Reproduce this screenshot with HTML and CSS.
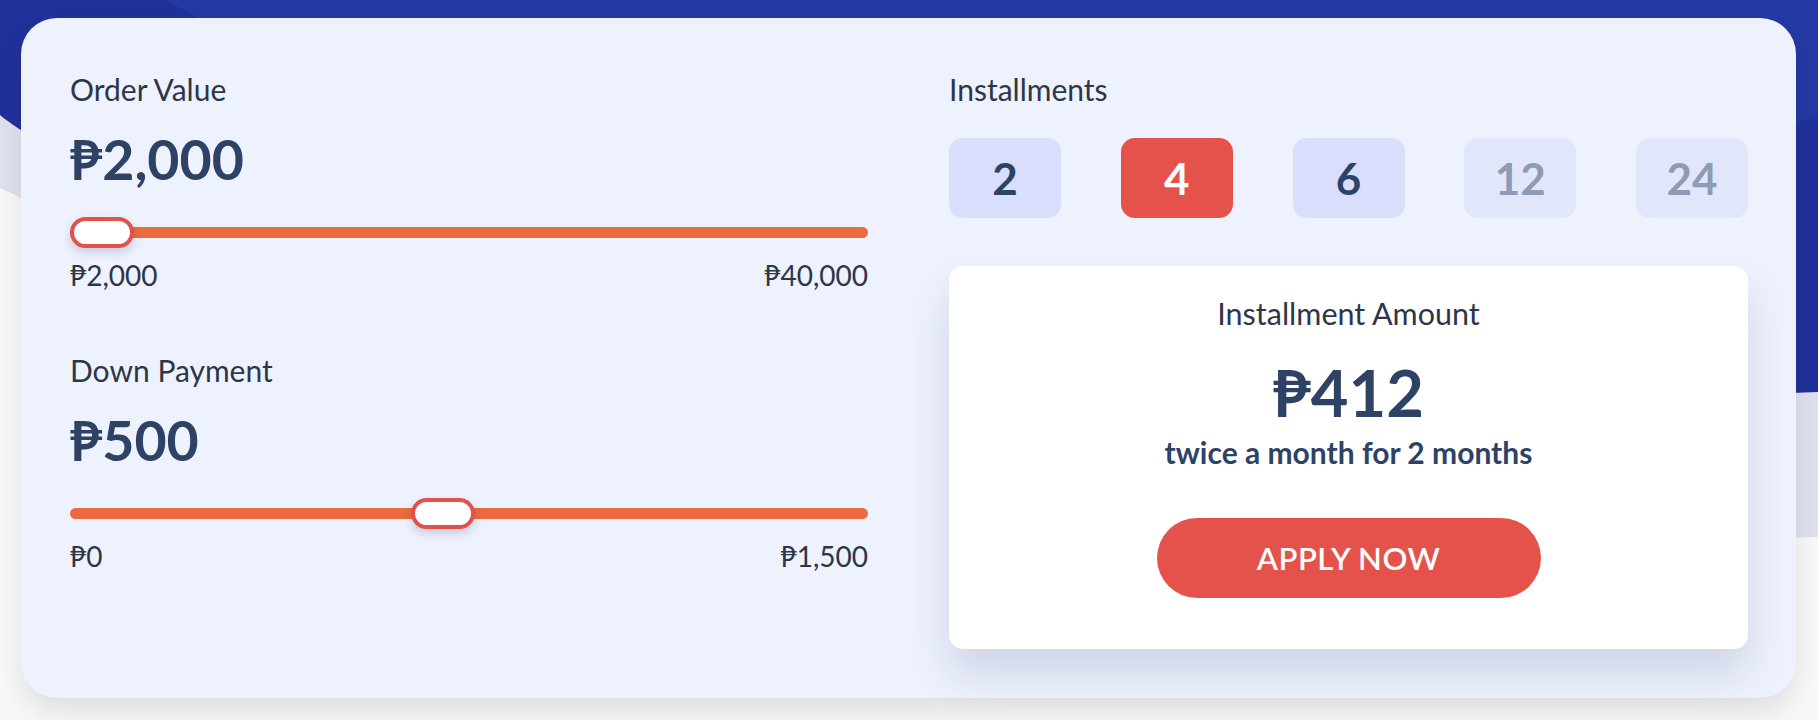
FILE: index.html
```html
<!DOCTYPE html>
<html lang="en">
<head>
<meta charset="utf-8">
<title>Installment Calculator</title>
<link rel="stylesheet" href="styles.css">
</head>
<body>
<svg class="bg" viewBox="0 0 1818 720" preserveAspectRatio="none" aria-hidden="true">
  <rect width="1818" height="720" fill="#f8f8f9"/>
  <path d="M0 0H1818V537C1000 560 150 260 0 188Z" fill="#dfe1ef"/>
  <path d="M0 0H1818V392C1000 420 150 240 0 115Z" fill="#22319a"/>
  <path d="M165 0H1818V118C1700 140 1500 160 1300 160C900 160 400 110 199 18Z" fill="#2539a4"/>
</svg>
<main class="calc">
  <section class="col">
    <div class="field">
      <div class="label">Order Value</div>
      <div class="value">₱2,000</div>
      <div class="slider">
        <div class="track"></div>
        <div class="thumb" style="left:0px"></div>
      </div>
      <div class="range"><span>₱2,000</span><span>₱40,000</span></div>
    </div>
    <div class="field field-2">
      <div class="label">Down Payment</div>
      <div class="value">₱500</div>
      <div class="slider">
        <div class="track"></div>
        <div class="thumb" style="left:341px"></div>
      </div>
      <div class="range"><span>₱0</span><span>₱1,500</span></div>
    </div>
  </section>
  <section class="col">
    <div class="label">Installments</div>
    <div class="terms">
      <button class="term">2</button>
      <button class="term active">4</button>
      <button class="term">6</button>
      <button class="term muted">12</button>
      <button class="term muted">24</button>
    </div>
    <div class="result">
      <div class="label label-lg">Installment Amount</div>
      <div class="amount">₱412</div>
      <div class="period">twice a month for 2 months</div>
      <button class="apply">APPLY NOW</button>
    </div>
  </section>
</main>
</body>
</html>
```

FILE: styles.css
```css
* { box-sizing: border-box; }

html, body {
  margin: 0;
  padding: 0;
}

body {
  position: relative;
  width: 1818px;
  height: 720px;
  overflow: hidden;
  font-family: Lato, "Noto Sans", "DejaVu Sans", sans-serif;
  color: #2d3648;
  background: #f8f8f9;
}

.bg {
  position: absolute;
  left: 0;
  top: 0;
  width: 1818px;
  height: 720px;
  z-index: 0;
}

.calc {
  position: relative;
  z-index: 1;
  margin: 18px 0 0 21px;
  width: 1775px;
  height: 680px;
  background: #eef2fe;
  border-radius: 36px;
  box-shadow: 0 14px 28px rgba(0, 0, 0, 0.10);
  padding: 53px 48px 49px 49px;
  display: grid;
  grid-template-columns: 798px 799px;
  column-gap: 81px;
  align-items: start;
}

.col {
  display: flex;
  flex-direction: column;
}

.label {
  font-size: 30px;
  line-height: 36px;
  font-weight: 400;
  color: #2d3648;
}

.label-lg {
  font-size: 30.5px;
}

.value {
  margin-top: 20px;
  font-size: 55.5px;
  line-height: 64px;
  font-weight: 700;
  color: #2e4265;
}

.field-2 {
  margin-top: 60px;
}

.slider {
  position: relative;
  margin-top: 26px;
  height: 31px;
  display: flex;
  align-items: center;
}

.track {
  width: 100%;
  height: 11px;
  border-radius: 6px;
  background: #eb6a3e;
}

.thumb {
  position: absolute;
  top: 0;
  width: 64px;
  height: 31px;
  border-radius: 16px;
  background: #ffffff;
  border: 4px solid #e4514a;
  box-shadow: 0 5px 10px rgba(40, 50, 90, 0.18);
}

.range {
  margin-top: 10px;
  display: flex;
  justify-content: space-between;
  font-size: 28px;
  line-height: 34px;
  color: #2d3648;
}

.terms {
  margin-top: 31px;
  display: flex;
  justify-content: space-between;
}

.term {
  width: 112px;
  height: 80px;
  border: 0;
  border-radius: 14px;
  background: #d8defb;
  color: #2e4265;
  font-family: inherit;
  font-size: 44px;
  font-weight: 700;
  padding: 0;
}

.term.active {
  background: #e5524b;
  color: #ffffff;
}

.term.muted {
  background: #e1e6fb;
  color: #8e9bb5;
}

.result {
  margin-top: 48px;
  height: 383px;
  background: #ffffff;
  border-radius: 14px;
  box-shadow: 0 26px 40px rgba(60, 70, 120, 0.17);
  padding-top: 29px;
  display: flex;
  flex-direction: column;
  align-items: center;
}

.amount {
  margin-top: 22px;
  font-size: 65px;
  line-height: 78px;
  font-weight: 700;
  color: #2e4265;
}

.period {
  margin-top: 3px;
  font-size: 30px;
  line-height: 36px;
  font-weight: 700;
  color: #2e4265;
}

.apply {
  margin-top: 48px;
  width: 384px;
  height: 80px;
  border: 0;
  border-radius: 40px;
  background: #e5524b;
  color: #ffffff;
  font-family: inherit;
  font-size: 31px;
  font-weight: 600;
  letter-spacing: 0.5px;
  padding: 0;
}
```
